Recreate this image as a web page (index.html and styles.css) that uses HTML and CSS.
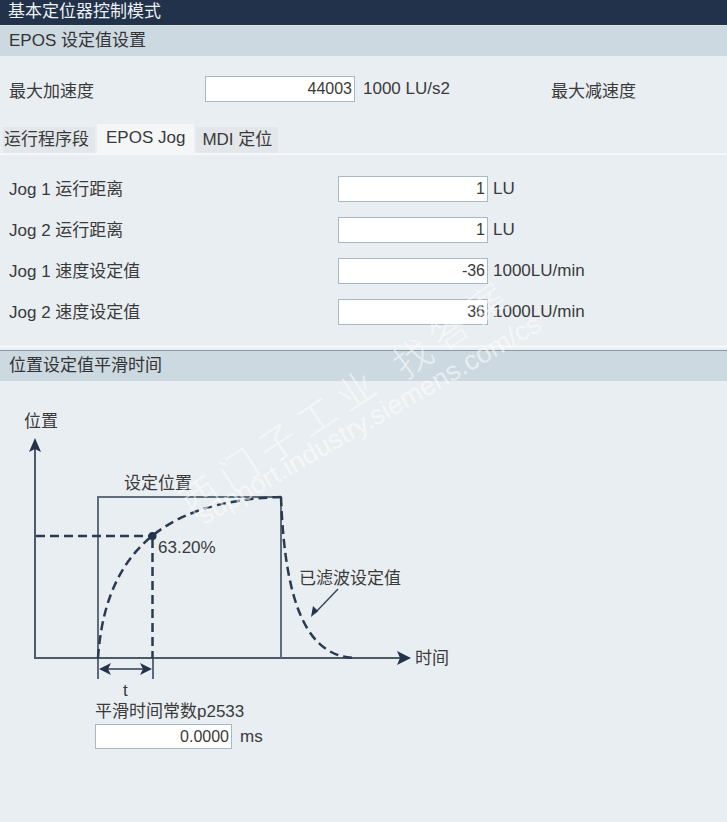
FILE: index.html
```html
<!DOCTYPE html>
<html lang="zh-CN">
<head>
    <meta charset="UTF-8">
    <meta name="viewport" content="width=device-width, initial-scale=1.0">
    <title>基本定位器控制模式</title>
    <link rel="stylesheet" href="styles.css">
</head>

<body>
    <div class="title-bar">基本定位器控制模式</div>

    <div class="section-header">EPOS 设定值设置</div>

    <div class="accel-row">
        <span class="accel-label">最大加速度</span>
        <input type="text" class="num-input" value="44003">
        <span class="unit">1000 LU/s2</span>
        <span class="decel-label">最大减速度</span>
    </div>

    <!-- pestañas -->
    <div class="tabs">
        <div class="tab first">运行程序段</div>
        <div class="tab active">EPOS Jog</div>
        <div class="tab">MDI 定位</div>
    </div>

    <div class="tab-panel">
        <div class="jog-row">
            <span class="jog-label">Jog 1 运行距离</span>
            <input type="text" class="num-input" value="1">
            <span class="unit">LU</span>
        </div>
        <div class="jog-row">
            <span class="jog-label">Jog 2 运行距离</span>
            <input type="text" class="num-input" value="1">
            <span class="unit">LU</span>
        </div>
        <div class="jog-row">
            <span class="jog-label">Jog 1 速度设定值</span>
            <input type="text" class="num-input" value="-36">
            <span class="unit">1000LU/min</span>
        </div>
        <div class="jog-row">
            <span class="jog-label">Jog 2 速度设定值</span>
            <input type="text" class="num-input" value="36">
            <span class="unit">1000LU/min</span>
        </div>
    </div>

    <div class="section-header smooth">位置设定值平滑时间</div>

    <div class="diagram">
        <svg class="chart" width="727" height="318" viewBox="0 0 727 318">
            <!-- ejes -->
            <text x="24" y="46" class="lbl">位置</text>
            <line x1="35" y1="66" x2="35" y2="278" class="axis"/>
            <path d="M35,57 L41,71 L35,68 L29,71 Z" class="head"/>
            <line x1="34" y1="277" x2="400" y2="277" class="axis"/>
            <path d="M411,277 L397,270 L400,277 L397,284 Z" class="head"/>
            <text x="415" y="283" class="lbl">时间</text>

            <!-- pulso de posicion -->
            <path d="M98,277 L98,116 L281,116 L281,277" class="pulse"/>
            <text x="124" y="108" class="lbl">设定位置</text>

            <!-- curvas filtradas -->
            <line x1="36" y1="155" x2="152" y2="155" class="dash"/>
            <line x1="152.5" y1="158" x2="152.5" y2="277" class="dash"/>
            <path d="M98,277 C104,190 145,120 281,116" class="dash"/>
            <path d="M281,116 C285,230 310,277 357,277" class="dash"/>
            <circle cx="152.5" cy="155" r="4" class="dot"/>
            <text x="158" y="172" class="lbl">63.20%</text>

            <text x="299" y="203" class="lbl">已滤波设定值</text>
            <line x1="338" y1="208" x2="315" y2="232" class="pointer"/>
            <path d="M311,236 L313,225 L318,230 Z" class="head"/>

            <!-- constante de tiempo -->
            <line x1="98" y1="277" x2="98" y2="298" class="tick"/>
            <line x1="153" y1="277" x2="153" y2="298" class="tick"/>
            <line x1="104" y1="288" x2="147" y2="288" class="tick"/>
            <path d="M99,288 L111,282 L108,288 L111,294 Z" class="head"/>
            <path d="M152,288 L140,282 L143,288 L140,294 Z" class="head"/>
            <text x="123" y="315" class="lbl">t</text>
        </svg>

        <div class="smooth-caption">平滑时间常数p2533</div>
        <div class="smooth-row">
            <input type="text" class="num-input small" value="0.0000">
            <span class="unit">ms</span>
        </div>
    </div>

    <!-- marca de agua -->
    <div class="watermark">
        <span class="wm-cn">西门子工业</span>
        <span class="wm-url">support.industry.siemens.com/cs</span>
        <span class="wm-ans">找答案</span>
    </div>
</body>
</html>
```

FILE: styles.css
```css
body {
    font-family: "Liberation Sans", "Noto Sans CJK SC", sans-serif;
    font-size: 17px;
    background-color: #e9eef2;
    color: #3a3a3a;
    margin: 0;
    padding: 0;
    height: 822px;
    position: relative;
    overflow: hidden;
}

.title-bar {
    height: 25px;
    line-height: 24px;
    padding-left: 8px;
    background-color: #22324a;
    color: #eef1f4;
    border-bottom: 1px solid #dde4ea;
}

.section-header {
    height: 30px;
    line-height: 30px;
    padding-left: 9px;
    background-color: #cdd9e1;
    color: #333333;
}

.section-header.smooth {
    border-top: 1px solid #8c9aa6;
}

.num-input {
    box-sizing: border-box;
    width: 150px;
    height: 26px;
    padding: 0 2px 0 4px;
    border: 1px solid #a9b8c5;
    background: #ffffff;
    font-family: "Liberation Sans", sans-serif;
    font-size: 16px;
    color: #3a3a3a;
    text-align: right;
    outline: none;
}

.unit {
    margin-left: 5px;
}

.accel-row {
    display: flex;
    align-items: center;
    height: 26px;
    margin-top: 20px;
    padding-left: 9px;
}

.accel-label {
    width: 196px;
}

.accel-row .unit {
    margin-left: 8px;
    width: 188px;
}

.tabs {
    display: flex;
    align-items: flex-end;
    height: 30px;
    margin-top: 21px;
    padding-left: 3px;
    gap: 2px;
}

.tab {
    height: 26px;
    line-height: 26px;
    padding: 0 6px;
    background-color: #e3e7eb;
}

.tab.first {
    padding: 0 6px 0 1px;
}

.tab.active {
    height: 29px;
    line-height: 28px;
    padding: 0 9px;
    background-color: #f5f6f7;
}

.tab-panel {
    border-top: 2px solid #f6f7f8;
    border-bottom: 3px solid #f3f5f7;
    padding: 21px 0 20px 9px;
    display: flex;
    flex-direction: column;
    gap: 15px;
    margin-bottom: 2px;
}

.jog-row {
    display: flex;
    align-items: center;
    height: 26px;
}

.jog-label {
    width: 329px;
    margin-top: -3px;
}

.diagram {
    position: relative;
}

.chart {
    display: block;
}

.chart .lbl {
    font-family: "Liberation Sans", "Noto Sans CJK SC", sans-serif;
    font-size: 17px;
    fill: #3a3a3a;
}

.chart .axis {
    stroke: #4d5b69;
    stroke-width: 2;
}

.chart .head {
    fill: #23344a;
}

.chart .pulse {
    fill: none;
    stroke: #5f6d7a;
    stroke-width: 2;
}

.chart .dash {
    fill: none;
    stroke: #2a3a50;
    stroke-width: 2.5;
    stroke-dasharray: 9 5;
}

.chart .dot {
    fill: #23344a;
}

.chart .pointer {
    stroke: #3b4958;
    stroke-width: 1.5;
}

.chart .tick {
    stroke: #2f3e52;
    stroke-width: 1.5;
}

.smooth-caption {
    padding-left: 95px;
    margin-top: 3px;
    line-height: 20px;
}

.smooth-row {
    display: flex;
    align-items: center;
    padding-left: 95px;
    margin-top: 2px;
}

.num-input.small {
    width: 137px;
    height: 25px;
}

.smooth-row .unit {
    margin-left: 8px;
}

.watermark {
    position: absolute;
    left: 0;
    top: 0;
    width: 727px;
    height: 822px;
    pointer-events: none;
    color: rgba(255, 255, 255, 0.55);
    font-family: "Liberation Sans", "Noto Sans CJK SC", sans-serif;
    font-weight: 300;
}

.watermark span {
    position: absolute;
    white-space: nowrap;
    transform-origin: left bottom;
}

.wm-cn {
    left: 198px;
    top: 472px;
    font-size: 38px;
    letter-spacing: 9px;
    transform: rotate(-34deg);
}

.wm-url {
    left: 208px;
    top: 500px;
    font-size: 27px;
    transform: rotate(-30deg);
}

.wm-ans {
    left: 412px;
    top: 334px;
    font-size: 38px;
    letter-spacing: 8px;
    transform: rotate(-36deg);
}
```
